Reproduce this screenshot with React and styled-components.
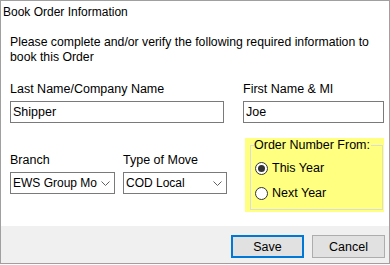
import React from 'react';
import styled, { createGlobalStyle } from 'styled-components';

const GlobalStyle = createGlobalStyle`
  html, body {
    margin: 0;
    padding: 0;
    background: #ffffff;
  }
  body {
    font-family: "Liberation Sans", Arial, sans-serif;
    color: #000000;
  }
`;

const Dialog = styled.div`
  box-sizing: border-box;
  width: 390px;
  height: 264px;
  border: 1px solid #a0a0a0;
  background: #ffffff;
  display: flex;
  flex-direction: column;
`;

const TitleBar = styled.div`
  padding: 4px 2px 0;
  font-size: 12px;
  line-height: 15px;
`;

const Body = styled.div`
  padding: 0 5px 0 9px;
  font-size: 12.5px;
  line-height: 15px;
`;

const Intro = styled.p`
  margin: 15px 0 0;
  font-size: 12.25px;
  line-height: 15px;
  white-space: nowrap;
`;

const Row = styled.div`
  display: flex;
  align-items: flex-start;
  gap: ${props => props.gap || 0}px;
  margin-top: ${props => props.top || 0}px;
`;

const Field = styled.div`
  display: flex;
  flex-direction: column;
  width: ${props => props.width}px;
  padding-top: ${props => props.offset || 0}px;
`;

const Label = styled.label`
  line-height: 15px;
  margin-bottom: 4px;
  white-space: nowrap;
`;

const TextBox = styled.div`
  box-sizing: border-box;
  height: 22px;
  border: 1px solid #7a7a7a;
  background: #ffffff;
  padding: 0 2px;
  line-height: 20px;
`;

const Select = styled.div`
  box-sizing: border-box;
  height: 22px;
  border: 1px solid #7a7a7a;
  background: #ffffff;
  display: flex;
  align-items: center;
  padding: 0 4px 0 2px;
  gap: 2px;
  font-size: 12px;
`;

const SelectText = styled.span`
  flex: 1;
  min-width: 0;
  overflow: hidden;
  white-space: nowrap;
  line-height: 20px;
`;

const ChevronIcon = styled.svg`
  flex-shrink: 0;
  display: block;
`;

const Chevron = () => (
  <ChevronIcon width="9" height="5" viewBox="0 0 9 5">
    <path d="M0.5 0.5 L4.5 4.5 L8.5 0.5" fill="none" stroke="#606060" strokeWidth="1" />
  </ChevronIcon>
);

const Highlight = styled.div`
  box-sizing: border-box;
  width: 139px;
  margin-left: 18px;
  background: #ffff80;
  padding: 0 1px 2px 5px;
`;

const Group = styled.fieldset`
  margin: 0;
  padding: 5px 3px 6px;
  border: 1px solid #dcdcdc;
  min-width: 0;
`;

const Legend = styled.legend`
  padding: 0 1px 0 0;
  line-height: 15px;
`;

const RadioRow = styled.div`
  display: flex;
  align-items: center;
  gap: 4px;
  height: 20px;
  margin-left: 1px;
  & + & {
    margin-top: 5px;
  }
`;

const RadioCircle = styled.span`
  box-sizing: border-box;
  width: 13px;
  height: 13px;
  border-radius: 50%;
  border: 1px solid #333333;
  background: #ffffff;
  display: flex;
  align-items: center;
  justify-content: center;

  &::after {
    content: '';
    width: 7px;
    height: 7px;
    border-radius: 50%;
    background: ${props => (props.checked ? '#333333' : 'transparent')};
  }
`;

const Footer = styled.div`
  margin-top: auto;
  height: 37px;
  box-sizing: border-box;
  background: #f0f0f0;
  display: flex;
  justify-content: flex-end;
  align-items: flex-start;
  gap: 8px;
  padding: 9px 4px 0 0;
`;

const Button = styled.button`
  box-sizing: border-box;
  width: 73px;
  height: 23px;
  margin: 0;
  padding: 0;
  background: #e1e1e1;
  border: ${props => (props.primary ? '2px solid #0078d7' : '1px solid #adadad')};
  font-family: "Liberation Sans", Arial, sans-serif;
  font-size: 12.5px;
  color: #000000;
`;

const Radio = ({ checked, children }) => (
  <RadioRow>
    <RadioCircle checked={checked} />
    <span>{children}</span>
  </RadioRow>
);

export default function App() {
  return (
    <>
      <GlobalStyle />
      <Dialog>
        <TitleBar>Book Order Information</TitleBar>
        <Body>
          <Intro>
            Please complete and/or verify the following required information to
            <br />
            book this Order
          </Intro>

          <Row gap={19} top={17}>
            <Field width={214}>
              <Label>Last Name/Company Name</Label>
              <TextBox>Shipper</TextBox>
            </Field>
            <Field width={141}>
              <Label>First Name &amp; MI</Label>
              <TextBox>Joe</TextBox>
            </Field>
          </Row>

          <Row top={15}>
            <Row gap={8}>
              <Field width={105} offset={15}>
                <Label>Branch</Label>
                <Select>
                  <SelectText>EWS Group Mo</SelectText>
                  <Chevron />
                </Select>
              </Field>
              <Field width={104} offset={15}>
                <Label>Type of Move</Label>
                <Select>
                  <SelectText>COD Local</SelectText>
                  <Chevron />
                </Select>
              </Field>
            </Row>
            <Highlight>
              <Group>
                <Legend>Order Number From:</Legend>
                <Radio checked>This Year</Radio>
                <Radio>Next Year</Radio>
              </Group>
            </Highlight>
          </Row>
        </Body>
        <Footer>
          <Button primary>Save</Button>
          <Button>Cancel</Button>
        </Footer>
      </Dialog>
    </>
  );
}
